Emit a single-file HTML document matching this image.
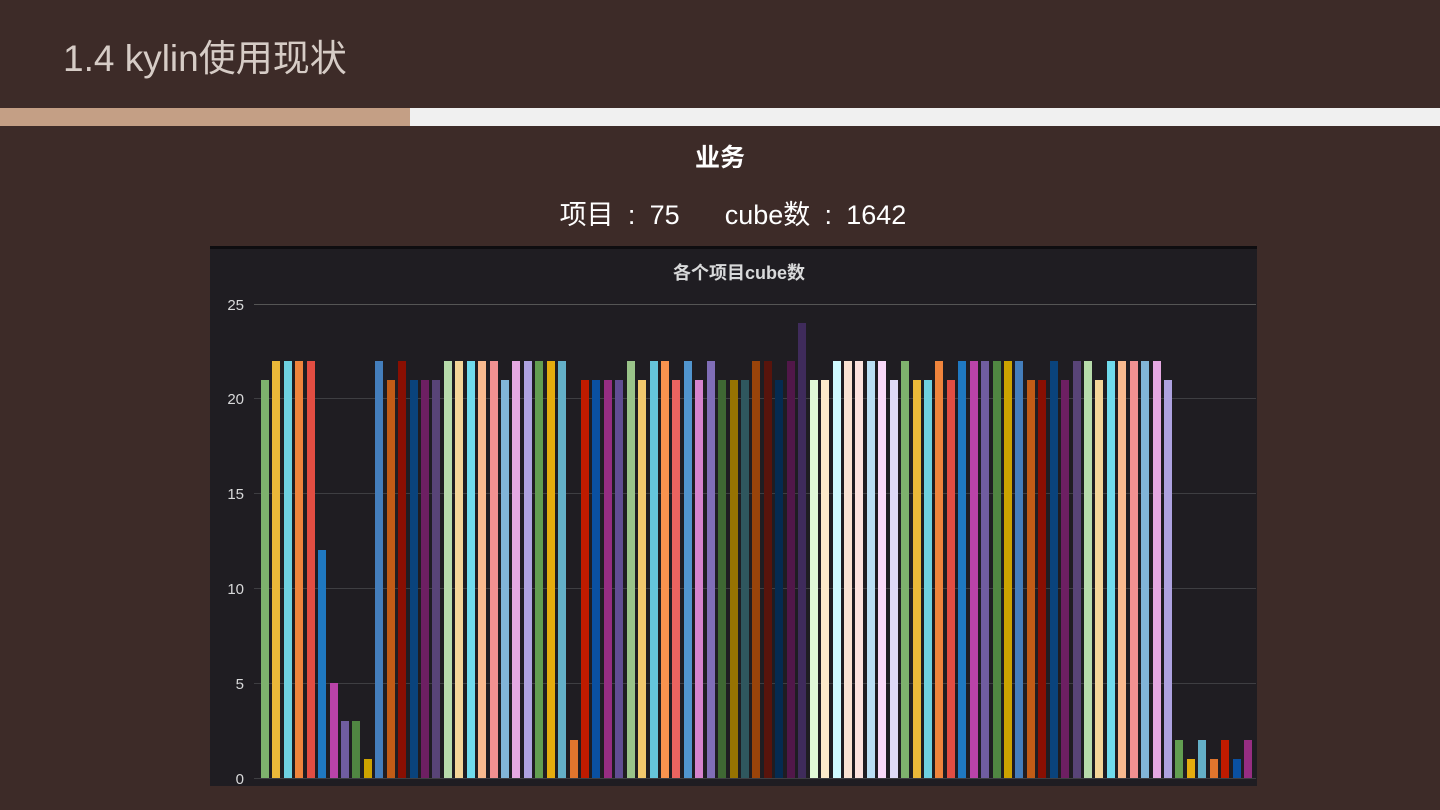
<!DOCTYPE html>
<html><head><meta charset="utf-8"><style>
body{margin:0;width:1440px;height:810px;background:#3d2b28;overflow:hidden;position:relative;font-family:"Liberation Sans","Noto Sans CJK SC",sans-serif}
.t{position:absolute;left:63px;top:28px;font-size:37px;color:#d6ccc6;font-family:"Liberation Sans","Noto Sans CJK SC",sans-serif}
.b1{position:absolute;left:0;top:108px;width:410px;height:18px;background:#c49f85}
.b2{position:absolute;left:410px;top:108px;width:1030px;height:18px;background:#f0f0f0}
.h{position:absolute;left:0;width:1440px;text-align:center;color:#fff;box-sizing:border-box}
.c{display:inline-block;width:36px;text-align:center}
</style></head><body>
<div class="t">1.4 kylin使用现状</div>
<div class="b1"></div><div class="b2"></div>
<div class="h" style="top:138px;font-size:25px;font-weight:bold">业务</div>
<div class="h" style="top:193px;font-size:27px;white-space:pre;padding-left:26px">项目<span class="c">:</span>75      cube数<span class="c">:</span>1642</div>
<svg style="position:absolute;left:0;top:0" width="1440" height="810">
<rect x="210" y="246" width="1047" height="540" fill="#1f1d22"/>
<rect x="210" y="246" width="1047" height="3" fill="#0e0d10"/>
<text x="739" y="279" text-anchor="middle" font-size="18" font-weight="bold" fill="#d8d9da" font-family="Liberation Sans,Noto Sans CJK SC,sans-serif">各个项目cube数</text>
<g stroke="#3e3e42" stroke-width="1">
<line x1="254" x2="1256" y1="304.5" y2="304.5" stroke="#555"/>
<line x1="254" x2="1256" y1="398.5" y2="398.5"/>
<line x1="254" x2="1256" y1="493.5" y2="493.5"/>
<line x1="254" x2="1256" y1="588.5" y2="588.5"/>
<line x1="254" x2="1256" y1="683.5" y2="683.5"/>
<line x1="254" x2="1256" y1="778.5" y2="778.5"/>
</g>
<g font-size="15" fill="#d8d9da" text-anchor="end" font-family="Liberation Sans,sans-serif">
<text x="244" y="310">25</text><text x="244" y="404">20</text><text x="244" y="499">15</text><text x="244" y="594">10</text><text x="244" y="689">5</text><text x="244" y="784">0</text>
</g>
<g>
<rect x="261" y="380" width="8" height="398" fill="#7eb26d"/>
<rect x="272" y="361" width="8" height="417" fill="#eab839"/>
<rect x="284" y="361" width="8" height="417" fill="#6ed0e0"/>
<rect x="295" y="361" width="8" height="417" fill="#ef843c"/>
<rect x="307" y="361" width="8" height="417" fill="#e24d42"/>
<rect x="318" y="550" width="8" height="228" fill="#1f78c1"/>
<rect x="330" y="683" width="8" height="95" fill="#ba43a9"/>
<rect x="341" y="721" width="8" height="57" fill="#705da0"/>
<rect x="352" y="721" width="8" height="57" fill="#508642"/>
<rect x="364" y="759" width="8" height="19" fill="#cca300"/>
<rect x="375" y="361" width="8" height="417" fill="#447ebc"/>
<rect x="387" y="380" width="8" height="398" fill="#c15c17"/>
<rect x="398" y="361" width="8" height="417" fill="#890f02"/>
<rect x="410" y="380" width="8" height="398" fill="#0a437c"/>
<rect x="421" y="380" width="8" height="398" fill="#6d1f62"/>
<rect x="432" y="380" width="8" height="398" fill="#584477"/>
<rect x="444" y="361" width="8" height="417" fill="#b7dbab"/>
<rect x="455" y="361" width="8" height="417" fill="#f4d598"/>
<rect x="467" y="361" width="8" height="417" fill="#70dbed"/>
<rect x="478" y="361" width="8" height="417" fill="#f9ba8f"/>
<rect x="490" y="361" width="8" height="417" fill="#f29191"/>
<rect x="501" y="380" width="8" height="398" fill="#82b5d8"/>
<rect x="512" y="361" width="8" height="417" fill="#e5a8e2"/>
<rect x="524" y="361" width="8" height="417" fill="#aea2e0"/>
<rect x="535" y="361" width="8" height="417" fill="#629e51"/>
<rect x="547" y="361" width="8" height="417" fill="#e5ac0e"/>
<rect x="558" y="361" width="8" height="417" fill="#64b0c8"/>
<rect x="570" y="740" width="8" height="38" fill="#e0752d"/>
<rect x="581" y="380" width="8" height="398" fill="#bf1b00"/>
<rect x="592" y="380" width="8" height="398" fill="#0a50a1"/>
<rect x="604" y="380" width="8" height="398" fill="#962d82"/>
<rect x="615" y="380" width="8" height="398" fill="#614d93"/>
<rect x="627" y="361" width="8" height="417" fill="#9ac48a"/>
<rect x="638" y="380" width="8" height="398" fill="#f2c96d"/>
<rect x="650" y="361" width="8" height="417" fill="#65c5db"/>
<rect x="661" y="361" width="8" height="417" fill="#f9934e"/>
<rect x="672" y="380" width="8" height="398" fill="#ea6460"/>
<rect x="684" y="361" width="8" height="417" fill="#5195ce"/>
<rect x="695" y="380" width="8" height="398" fill="#d683ce"/>
<rect x="707" y="361" width="8" height="417" fill="#806eb7"/>
<rect x="718" y="380" width="8" height="398" fill="#3f6833"/>
<rect x="730" y="380" width="8" height="398" fill="#967302"/>
<rect x="741" y="380" width="8" height="398" fill="#2f575e"/>
<rect x="752" y="361" width="8" height="417" fill="#99440a"/>
<rect x="764" y="361" width="8" height="417" fill="#58140c"/>
<rect x="775" y="380" width="8" height="398" fill="#052b51"/>
<rect x="787" y="361" width="8" height="417" fill="#511749"/>
<rect x="798" y="323" width="8" height="455" fill="#3f2b5b"/>
<rect x="810" y="380" width="8" height="398" fill="#e0f9d7"/>
<rect x="821" y="380" width="8" height="398" fill="#fceaca"/>
<rect x="833" y="361" width="8" height="417" fill="#cffaff"/>
<rect x="844" y="361" width="8" height="417" fill="#f9e2d2"/>
<rect x="855" y="361" width="8" height="417" fill="#fce2de"/>
<rect x="867" y="361" width="8" height="417" fill="#badff4"/>
<rect x="878" y="361" width="8" height="417" fill="#f9d9f9"/>
<rect x="890" y="380" width="8" height="398" fill="#dedaf7"/>
<rect x="901" y="361" width="8" height="417" fill="#7eb26d"/>
<rect x="913" y="380" width="8" height="398" fill="#eab839"/>
<rect x="924" y="380" width="8" height="398" fill="#6ed0e0"/>
<rect x="935" y="361" width="8" height="417" fill="#ef843c"/>
<rect x="947" y="380" width="8" height="398" fill="#e24d42"/>
<rect x="958" y="361" width="8" height="417" fill="#1f78c1"/>
<rect x="970" y="361" width="8" height="417" fill="#ba43a9"/>
<rect x="981" y="361" width="8" height="417" fill="#705da0"/>
<rect x="993" y="361" width="8" height="417" fill="#508642"/>
<rect x="1004" y="361" width="8" height="417" fill="#cca300"/>
<rect x="1015" y="361" width="8" height="417" fill="#447ebc"/>
<rect x="1027" y="380" width="8" height="398" fill="#c15c17"/>
<rect x="1038" y="380" width="8" height="398" fill="#890f02"/>
<rect x="1050" y="361" width="8" height="417" fill="#0a437c"/>
<rect x="1061" y="380" width="8" height="398" fill="#6d1f62"/>
<rect x="1073" y="361" width="8" height="417" fill="#584477"/>
<rect x="1084" y="361" width="8" height="417" fill="#b7dbab"/>
<rect x="1095" y="380" width="8" height="398" fill="#f4d598"/>
<rect x="1107" y="361" width="8" height="417" fill="#70dbed"/>
<rect x="1118" y="361" width="8" height="417" fill="#f9ba8f"/>
<rect x="1130" y="361" width="8" height="417" fill="#f29191"/>
<rect x="1141" y="361" width="8" height="417" fill="#82b5d8"/>
<rect x="1153" y="361" width="8" height="417" fill="#e5a8e2"/>
<rect x="1164" y="380" width="8" height="398" fill="#aea2e0"/>
<rect x="1175" y="740" width="8" height="38" fill="#629e51"/>
<rect x="1187" y="759" width="8" height="19" fill="#e5ac0e"/>
<rect x="1198" y="740" width="8" height="38" fill="#64b0c8"/>
<rect x="1210" y="759" width="8" height="19" fill="#e0752d"/>
<rect x="1221" y="740" width="8" height="38" fill="#bf1b00"/>
<rect x="1233" y="759" width="8" height="19" fill="#0a50a1"/>
<rect x="1244" y="740" width="8" height="38" fill="#962d82"/>
</g>
</svg>
</body></html>
